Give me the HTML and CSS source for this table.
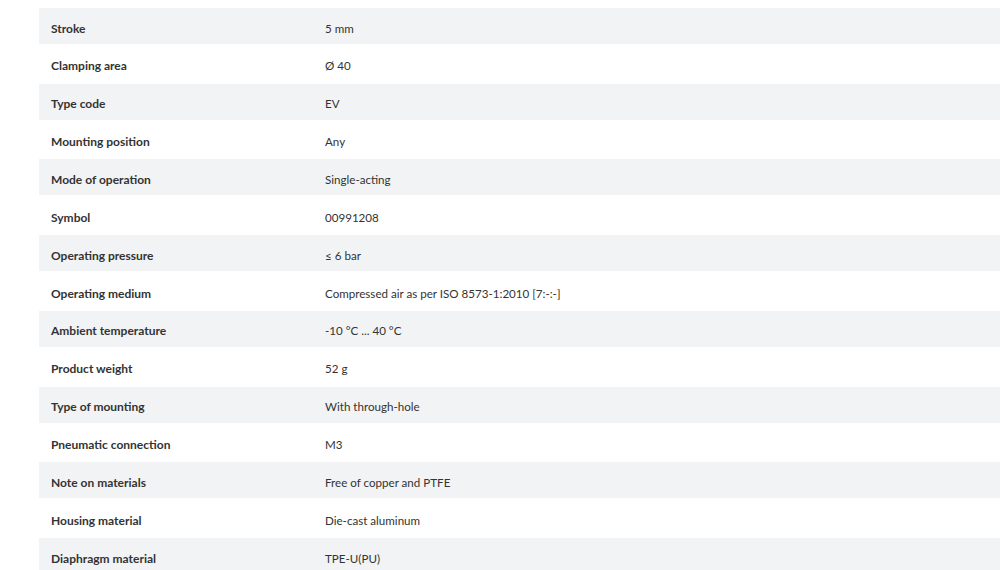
FILE: index.html
```html
<!DOCTYPE html>
<html lang="en">

<head>
    <meta charset="UTF-8">
    <title>Technical data</title>
    <link rel="stylesheet" href="styles.css">
</head>

<body>

    <!-- Technical data -->
    <div class="data-table">
        <div class="data-row"><div class="label">Stroke</div><div class="value">5 mm</div></div>
        <div class="data-row"><div class="label">Clamping area</div><div class="value">Ø 40</div></div>
        <div class="data-row"><div class="label">Type code</div><div class="value">EV</div></div>
        <div class="data-row"><div class="label">Mounting position</div><div class="value">Any</div></div>
        <div class="data-row"><div class="label">Mode of operation</div><div class="value">Single-acting</div></div>
        <div class="data-row"><div class="label">Symbol</div><div class="value">00991208</div></div>
        <div class="data-row"><div class="label">Operating pressure</div><div class="value">≤ 6 bar</div></div>
        <div class="data-row"><div class="label">Operating medium</div><div class="value">Compressed air as per ISO 8573-1:2010 [7:-:-]</div></div>
        <div class="data-row"><div class="label">Ambient temperature</div><div class="value">-10 °C ... 40 °C</div></div>
        <div class="data-row"><div class="label">Product weight</div><div class="value">52 g</div></div>
        <div class="data-row"><div class="label">Type of mounting</div><div class="value">With through-hole</div></div>
        <div class="data-row"><div class="label">Pneumatic connection</div><div class="value">M3</div></div>
        <div class="data-row"><div class="label">Note on materials</div><div class="value">Free of copper and PTFE</div></div>
        <div class="data-row"><div class="label">Housing material</div><div class="value">Die-cast aluminum</div></div>
        <div class="data-row"><div class="label">Diaphragm material</div><div class="value">TPE-U(PU)</div></div>
    </div>

</body>

</html>
```

FILE: styles.css
```css
* {
    margin: 0;
    padding: 0;
    box-sizing: border-box;
    font-family: "Lato", sans-serif;
}

body {
    background-color: #ffffff;
    color: #333333;
    overflow: hidden;
}

/* Table */
.data-table {
    display: flex;
    flex-direction: column;
    gap: 1.86px;
    margin: 8px 0 0 39px;
    width: 980px;
}

.data-row {
    display: flex;
    align-items: center;
    height: 36px;
    padding-top: 4px;
}

.data-row:nth-child(odd) {
    background-color: #f2f3f5;
}

.label {
    width: 274px;
    padding-left: 12px;
    font-size: 12px;
    font-weight: bold;
}

.value {
    flex: 1;
    padding-left: 12px;
    font-size: 11.6px;
}
```
